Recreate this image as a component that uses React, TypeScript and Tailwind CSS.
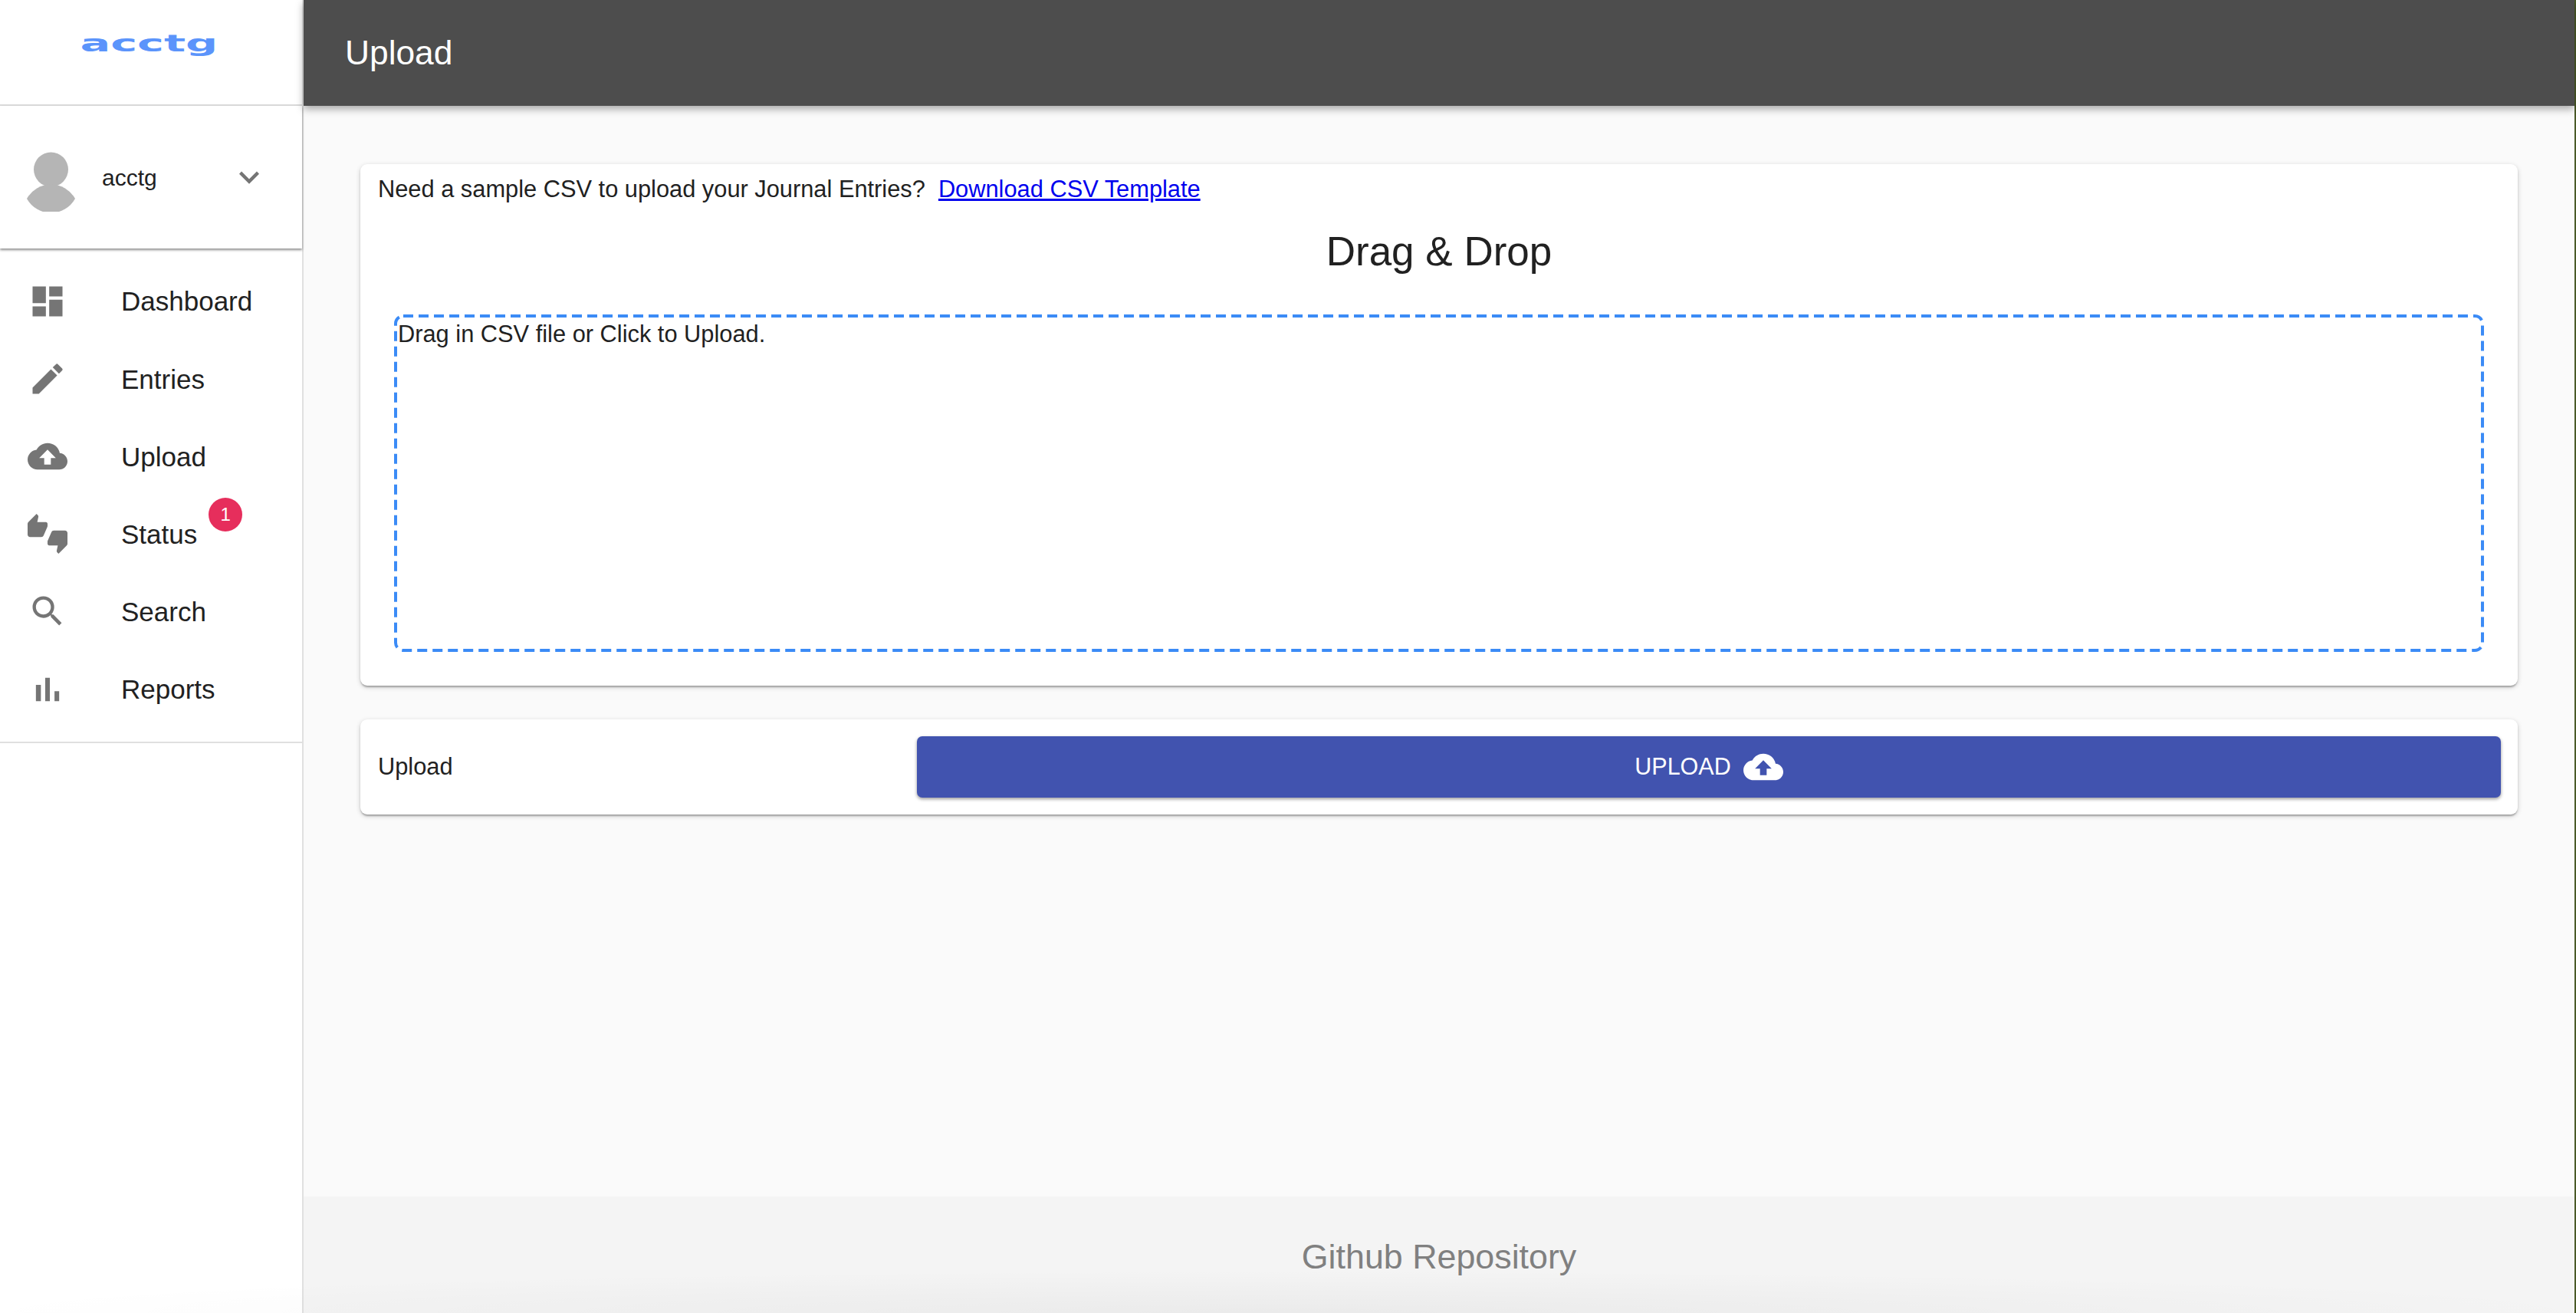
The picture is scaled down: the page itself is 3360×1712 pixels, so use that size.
import { MdDashboard, MdCreate, MdCloudUpload, MdThumbsUpDown, MdSearch, MdExpandMore } from 'react-icons/md'

function ReportsIcon({ className }: { className?: string }) {
  return (
    <svg viewBox="0 0 24 24" fill="currentColor" className={className}>
      <path d="M5 9.2h3V19H5zM10.6 5h2.8v14h-2.8zm5.6 8H19v6h-2.8z" />
    </svg>
  )
}

const navItems = [
  { label: 'Dashboard', icon: MdDashboard },
  { label: 'Entries', icon: MdCreate },
  { label: 'Upload', icon: MdCloudUpload },
  { label: 'Status', icon: MdThumbsUpDown, badge: '1' },
  { label: 'Search', icon: MdSearch },
  { label: 'Reports', icon: ReportsIcon },
]

function Avatar() {
  return (
    <svg width="64" height="78" viewBox="0 0 64 78" className="mt-[12px] shrink-0">
      <circle cx="31.5" cy="23" r="22.5" fill="#b5b5b5" />
      <path d="M0 61 A 36 36 0 0 1 63 61 A 36 36 0 0 1 0 61 Z" fill="#b5b5b5" />
    </svg>
  )
}

export default function App() {
  return (
    <div className="relative flex h-[1712px] w-[3360px] overflow-hidden bg-[#fafafa] font-['Liberation_Sans',sans-serif] text-[#212121]">

      {/* Sidebar */}
      <div className="flex w-[396px] shrink-0 flex-col border-r-2 border-[#e0e0e0] bg-white">
        <div className="flex h-[138px] items-start justify-center border-b-2 border-[#dcdcdc]">
          <span className="mt-[36px] ml-[-6px] origin-center scale-x-[1.9] font-['DejaVu_Sans',sans-serif] text-[31px] leading-[40px] font-bold text-[#5b94fb]">
            acctg
          </span>
        </div>

        <div className="flex h-[186px] items-center pl-[35px] shadow-[0_2px_3px_rgba(0,0,0,0.45)]">
          <Avatar />
          <span className="ml-[34px] text-[30px]">acctg</span>
          <MdExpandMore className="mr-[43px] ml-auto h-[52px] w-[52px] text-[#757575]" />
        </div>

        <nav className="flex flex-col border-b-2 border-[#e0e0e0] py-[18px]">
          {navItems.map((item) => {
            const Icon = item.icon
            return (
              <div key={item.label} className="flex h-[101.2px] items-center pl-[36px]">
                <Icon className="h-[52px] w-[52px] shrink-0 text-[#757575]" />
                <div className="relative mt-[2px] ml-[70px] text-[35px]">
                  {item.label}
                  {item.badge && (
                    <span className="absolute top-[-22px] right-[-59px] flex h-[44px] w-[44px] items-center justify-center rounded-full bg-[#e62e5c] text-[24px] text-white">
                      {item.badge}
                    </span>
                  )}
                </div>
              </div>
            )
          })}
        </nav>
      </div>

      {/* Main */}
      <div className="flex min-w-0 flex-1 flex-col border-r-2 border-[#4a5a28]">
        <header className="z-10 flex h-[138px] shrink-0 items-center bg-[#4d4d4d] pl-[54px] text-[44.3px] text-white shadow-[0_4px_10px_rgba(0,0,0,0.35)]">
          Upload
        </header>

        <main className="flex flex-1 flex-col gap-[44px] px-[74px] pt-[76px]">
          <section className="flex h-[680px] flex-col rounded-[9px] bg-white shadow-[0_2px_6px_rgba(0,0,0,0.2),0_2px_2px_rgba(0,0,0,0.14),0_4px_2px_-2px_rgba(0,0,0,0.12)]">
            <div className="flex h-[66px] items-center pl-[23px] text-[30.8px]">
              Need a sample CSV to upload your Journal Entries?
              <a href="#" className="ml-[17px] text-[#0000ee] underline">Download CSV Template</a>
            </div>
            <h2 className="mt-[18px] text-center text-[53px] leading-[60px]">Drag &amp; Drop</h2>
            <div className="relative mx-[44px] mt-[52px] h-[440px] px-[5px] pt-[6px] text-[30.8px] leading-[40px]">
              <svg width="2726" height="440" className="absolute top-0 left-0">
                <rect x="2" y="2" width="2722" height="436" rx="10" fill="none" stroke="#3b8bf6" strokeWidth="4" strokeDasharray="13 7" />
              </svg>
              Drag in CSV file or Click to Upload.
            </div>
          </section>

          <section className="flex h-[124px] items-center justify-between rounded-[9px] bg-white pr-[22px] pl-[23px] shadow-[0_2px_6px_rgba(0,0,0,0.2),0_2px_2px_rgba(0,0,0,0.14),0_4px_2px_-2px_rgba(0,0,0,0.12)]">
            <span className="text-[30.8px]">Upload</span>
            <button className="flex h-[80px] w-[2066px] items-center justify-center gap-[16px] rounded-[7px] bg-[#4153af] text-[30.5px] text-white shadow-[0_2px_4px_rgba(0,0,0,0.4)]">
              UPLOAD
              <MdCloudUpload className="h-[52px] w-[52px]" />
            </button>
          </section>
        </main>

        <footer className="flex h-[152px] shrink-0 items-center justify-center bg-[#f4f4f4] pt-[6px] text-[44.8px] text-[#808080]">
          Github Repository
        </footer>
      </div>

      {/* browser edge shade along the bottom */}
      <div className="pointer-events-none absolute inset-x-0 bottom-0 h-[56px] bg-[radial-gradient(ellipse_1750px_56px_at_50%_100%,rgba(0,0,0,0.04),transparent)]" />
    </div>
  )
}
